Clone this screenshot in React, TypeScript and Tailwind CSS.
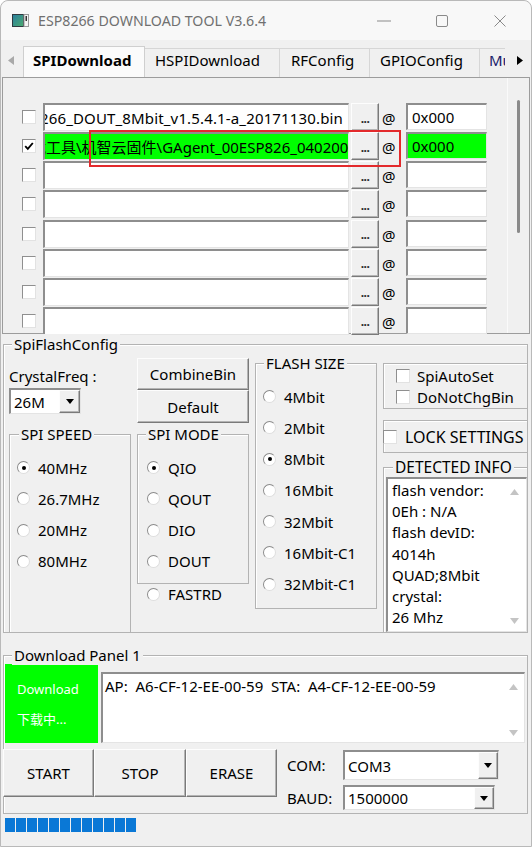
import React from "react";

const FONT = "font-['Noto_Sans','Noto_Sans_CJK_SC',sans-serif]";

const raised =
  "bg-[#f0f0f0] border border-t-[#fdfdfd] border-l-[#fdfdfd] border-b-[#7a7a7a] border-r-[#7a7a7a] shadow-[inset_-1px_-1px_0_#b4b4b4]";
const sunken =
  "border-t-2 border-l-2 border-b border-r border-t-[#8e8e8e] border-l-[#8e8e8e] border-b-[#e4e4e4] border-r-[#e4e4e4]";

function Check({ checked = false, className = "" }: { checked?: boolean; className?: string }) {
  return (
    <div
      className={`relative w-[14px] h-[14px] shrink-0 bg-white border border-t-[#8f8f8f] border-l-[#8f8f8f] border-b-[#e2e2e2] border-r-[#e2e2e2] ${className}`}
    >
      {checked && (
        <svg viewBox="0 0 12 12" className="absolute inset-0 w-full h-full">
          <path d="M2.2 6.2 L4.8 8.8 L9.8 3" fill="none" stroke="#000" strokeWidth="1.9" />
        </svg>
      )}
    </div>
  );
}

function Radio({ checked = false }: { checked?: boolean }) {
  return (
    <div className="w-[13px] h-[13px] shrink-0 rounded-full bg-white border border-t-[#8a8a8a] border-l-[#8a8a8a] border-b-[#dedede] border-r-[#dedede] flex items-center justify-center">
      {checked && <div className="w-[4px] h-[4px] rounded-full bg-black" />}
    </div>
  );
}

function RadioItem({ label, checked = false }: { label: string; checked?: boolean }) {
  return (
    <div className="h-[31.25px] flex items-center gap-[8px]">
      <Radio checked={checked} />
      <span className="whitespace-nowrap">{label}</span>
    </div>
  );
}

function Group({
  label,
  className = "",
  labelClass = "",
  children,
}: {
  label?: string;
  className?: string;
  labelClass?: string;
  children?: React.ReactNode;
}) {
  return (
    <div className={`relative shrink-0 border border-[#b3b3b3] shadow-[inset_1px_1px_0_#ffffff] ${className}`}>
      {label && (
        <span
          className={`absolute -top-[11px] px-[2px] bg-[#f0f0f0] leading-[20px] whitespace-nowrap ${labelClass}`}
        >
          {label}
        </span>
      )}
      {children}
    </div>
  );
}

function DownTriangle() {
  return (
    <svg width="8" height="5" viewBox="0 0 8 5">
      <path d="M0 0 H8 L4 5 Z" fill="#000" />
    </svg>
  );
}

function Combo({
  value,
  className,
  btnClass,
}: {
  value: string;
  className: string;
  btnClass: string;
}) {
  return (
    <div className={`flex shrink-0 bg-white ${sunken} ${className}`}>
      <div className="flex-1 flex items-center pl-[3px] whitespace-nowrap">{value}</div>
      <div className={`${raised} flex items-center justify-center ${btnClass}`}>
        <DownTriangle />
      </div>
    </div>
  );
}

function ScrollArrows({ className = "" }: { className?: string }) {
  return (
    <div className={`flex flex-col justify-between items-center ${className}`}>
      <svg width="9" height="6" viewBox="0 0 9 6">
        <path d="M0 6 L4.5 0 L9 6 Z" fill="#c4c4c4" />
      </svg>
      <svg width="9" height="6" viewBox="0 0 9 6">
        <path d="M0 0 L9 0 L4.5 6 Z" fill="#c4c4c4" />
      </svg>
    </div>
  );
}

function TitleBar() {
  return (
    <div className="h-[39px] flex items-center bg-[#f8f8f8] rounded-t-[8px]">
      <svg className="ml-[11px]" width="17" height="13" viewBox="0 0 17 13">
        <defs>
          <linearGradient id="appIconFill" x1="0" y1="0" x2="1" y2="1">
            <stop offset="0" stopColor="#2b7fa0" />
            <stop offset="1" stopColor="#4bab6e" />
          </linearGradient>
        </defs>
        <rect x="0.5" y="0.5" width="11" height="12" fill="url(#appIconFill)" stroke="#2f3a40" />
        <rect x="12" y="0.5" width="4.5" height="12" fill="#f4f4f4" stroke="#9a9a9a" />
        <rect x="13.5" y="2" width="1.5" height="5" fill="#333" />
      </svg>
      <span className="ml-[9px] text-[14.2px] text-[#707070] whitespace-nowrap">ESP8266 DOWNLOAD TOOL V3.6.4</span>
      <div className="ml-auto mr-[2px] flex h-full">
        <div className="w-[58px] flex items-center justify-center">
          <svg width="14" height="2" viewBox="0 0 14 2">
            <rect x="0" y="0.5" width="14" height="1" fill="#8a8a8a" />
          </svg>
        </div>
        <div className="w-[58px] flex items-center justify-center">
          <svg width="12" height="12" viewBox="0 0 12 12">
            <rect x="0.5" y="0.5" width="11" height="11" rx="1.5" fill="none" stroke="#8a8a8a" />
          </svg>
        </div>
        <div className="w-[58px] flex items-center justify-center">
          <svg width="12" height="12" viewBox="0 0 12 12">
            <path d="M0.5 0.5 L11.5 11.5 M11.5 0.5 L0.5 11.5" stroke="#8a8a8a" strokeWidth="1" />
          </svg>
        </div>
      </div>
    </div>
  );
}

function Tabs() {
  return (
    <div className="h-[37px] flex items-end">
      <div className="w-[22px] h-full flex items-center pl-[7px] pt-[4px]">
        <svg width="6" height="9" viewBox="0 0 6 9">
          <path d="M6 0 L0 4.5 L6 9 Z" fill="#a9a9a9" />
        </svg>
      </div>
      <div className="w-[122px] h-[31px] bg-[#fbfbfb] border border-b-0 border-[#cfcfcf] pl-[9px] pt-[3px] font-bold whitespace-nowrap">
        SPIDownload
      </div>
      <div className="w-[135px] h-[29px] border-t border-r border-[#d6d6d6] pl-[10px] pt-[1px] whitespace-nowrap">
        HSPIDownload
      </div>
      <div className="w-[90px] h-[29px] border-t border-r border-[#d6d6d6] pl-[11px] pt-[1px] whitespace-nowrap">
        RFConfig
      </div>
      <div className="w-[110px] h-[29px] border-t border-r border-[#d6d6d6] pl-[10px] pt-[1px] whitespace-nowrap">
        GPIOConfig
      </div>
      <div className="w-[25px] h-[29px] border-t border-[#d6d6d6] pl-[9px] pt-[1px] whitespace-nowrap overflow-hidden text-[#1a1a6a]">
        MultiDownload
      </div>
      <div className="flex-1 h-full flex items-center pl-[12px] pt-[3px]">
        <svg width="6" height="9" viewBox="0 0 6 9">
          <path d="M0 0 L6 4.5 L0 9 Z" fill="#000" />
        </svg>
      </div>
    </div>
  );
}

type FileRow = { checked: boolean; path: string; addr: string; green?: boolean; end?: boolean };

const files: FileRow[] = [
  {
    checked: false,
    path: "D:\\GAgent\\esp8266\\GAgent_00ESP8266_DOUT_8Mbit_v1.5.4.1-a_20171130.bin",
    addr: "0x000",
    end: true,
  },
  {
    checked: true,
    path: "载工具\\机智云固件\\GAgent_00ESP826_04020029_8Mbit.bin",
    addr: "0x000",
    green: true,
  },
  { checked: false, path: "", addr: "" },
  { checked: false, path: "", addr: "" },
  { checked: false, path: "", addr: "" },
  { checked: false, path: "", addr: "" },
  { checked: false, path: "", addr: "" },
  { checked: false, path: "", addr: "" },
];

function FilePanel() {
  return (
    <div className="relative ml-[1px] w-[528px] h-[257px] border border-[#9c9c9c] flex">
      <div className="w-[504px] pt-[25px] pl-[19px] flex flex-col">
        {files.map((f, i) => (
          <div key={i} className="h-[29.14px] flex items-start shrink-0">
            <Check className="mt-[7px]" checked={f.checked} />
            <div
              className={`ml-[7px] w-[306px] h-[28px] ${sunken} overflow-hidden flex items-center ${
                f.green ? "bg-[#00ff00]" : "bg-white"
              } ${f.end ? "justify-end pr-[5px]" : ""}`}
            >
              <span
                className={`whitespace-nowrap ${f.green ? "-ml-[14px]" : ""} ${f.end ? "tracking-[0.15px]" : ""}`}
              >
                {f.path}
              </span>
            </div>
            <div className={`ml-[2px] w-[28px] h-[28px] ${raised} flex items-center justify-center`}>
              <span className="text-[12px] leading-none font-bold text-[#2a2a2a] pt-[3px] tracking-[-0.5px]">...</span>
            </div>
            <span className="ml-[3px] w-[13px] h-[28px] flex items-center pt-[2px]">@</span>
            <div
              className={`ml-[11px] w-[81px] h-[27px] ${sunken} flex items-center pl-[4px] ${
                f.green ? "bg-[#00ff00]" : "bg-white"
              }`}
            >
              {f.addr}
            </div>
          </div>
        ))}
      </div>
      <div className="w-[22px] border-l border-[#fafafa] pt-[22px] flex justify-center">
        <div className="w-[3px] h-[133px] rounded-full bg-[#8a8a8a]" />
      </div>
      {/* highlight frame over the second row */}
      <div className="absolute left-[86px] top-[52px] w-[312px] h-[37px] border-2 border-[#e32a2c]" />
    </div>
  );
}

function SpiFlashConfig() {
  return (
    <Group label="SpiFlashConfig" labelClass="left-[8px]" className="mt-[10px] ml-[2px] w-[525px] h-[289px]">
      <div className="flex pl-[5px]">
        {/* crystal + speed */}
        <div className="w-[122px] flex flex-col shrink-0">
          <div className="mt-[21px] h-[20px] whitespace-nowrap">CrystalFreq :</div>
          <Combo value="26M" className="mt-[2px] w-[72px] h-[26px]" btnClass="w-[21px] h-full" />
          <Group label="SPI SPEED" labelClass="left-[9px]" className="mt-[20px] h-[199px] pt-[17px] pl-[7px]">
            <RadioItem label="40MHz" checked />
            <RadioItem label="26.7MHz" />
            <RadioItem label="20MHz" />
            <RadioItem label="80MHz" />
          </Group>
        </div>
        {/* buttons + mode */}
        <div className="ml-[6px] w-[112px] flex flex-col shrink-0">
          <div className={`mt-[13px] h-[32px] ${raised} flex items-center justify-center`}>CombineBin</div>
          <div className={`h-[33px] ${raised} flex items-center justify-center`}>Default</div>
          <Group label="SPI MODE" labelClass="left-[8px]" className="mt-[11px] h-[150px] pt-[17px] pl-[9px]">
            <RadioItem label="QIO" checked />
            <RadioItem label="QOUT" />
            <RadioItem label="DIO" />
            <RadioItem label="DOUT" />
          </Group>
          <div className="h-[20px] pl-[10px] flex items-center gap-[8px]">
            <Radio />
            <span>FASTRD</span>
          </div>
        </div>
        {/* flash size */}
        <div className="ml-[6px] w-[122px] flex flex-col shrink-0">
          <Group label="FLASH SIZE" labelClass="left-[8px]" className="mt-[18px] h-[246px] pt-[17px] pl-[7px]">
            <RadioItem label="4Mbit" />
            <RadioItem label="2Mbit" />
            <RadioItem label="8Mbit" checked />
            <RadioItem label="16Mbit" />
            <RadioItem label="32Mbit" />
            <RadioItem label="16Mbit-C1" />
            <RadioItem label="32Mbit-C1" />
          </Group>
        </div>
        {/* options + detected info */}
        <div className="ml-[6px] w-[145px] flex flex-col shrink-0">
          <Group className="mt-[18px] h-[46px] pt-[1px] pl-[12px]">
            <div className="h-[21px] flex items-center gap-[7px]">
              <Check />
              <span>SpiAutoSet</span>
            </div>
            <div className="h-[21px] flex items-center gap-[7px]">
              <Check />
              <span>DoNotChgBin</span>
            </div>
          </Group>
          <Group className="mt-[11px] h-[33px] flex items-center">
            <Check className="-ml-px" />
            <span className="ml-[8px] text-[16px] whitespace-nowrap">LOCK SETTINGS</span>
          </Group>
          <Group
            label="DETECTED INFO"
            labelClass="left-[9px] text-[15.5px]"
            className="mt-[14px] h-[166px] pt-[9px] pl-[2px]"
          >
            <div className={`w-[141px] h-[155px] bg-white ${sunken} flex`}>
              <div className="flex-1 pl-[4px] pt-[1px] leading-[21.2px] whitespace-nowrap">
                <div>flash vendor:</div>
                <div>0Eh : N/A</div>
                <div>flash devID:</div>
                <div>4014h</div>
                <div>QUAD;8Mbit</div>
                <div>crystal:</div>
                <div>26 Mhz</div>
              </div>
              <ScrollArrows className="w-[20px] pt-[10px] pb-[7px] pr-[3px]" />
            </div>
          </Group>
        </div>
      </div>
    </Group>
  );
}

function DownloadPanel() {
  return (
    <Group label="Download Panel 1" labelClass="left-[8px]" className="mt-[22px] ml-[2px] w-[525px] h-[159px]">
      <div className="flex pl-[1px] pt-[8px]">
        <div className="w-[93px] h-[79px] bg-[#00ff00] text-white text-[13px] leading-[29.7px] pl-[12px] pt-[11px]">
          <div>Download</div>
          <div>下载中...</div>
        </div>
        <div className={`ml-[3px] mt-[8px] w-[424px] h-[71px] bg-white ${sunken} flex`}>
          <div className="flex-1 pl-[2px] pt-[2px] whitespace-pre">AP:  A6-CF-12-EE-00-59  STA:  A4-CF-12-EE-00-59</div>
          <ScrollArrows className="w-[20px] pt-[10px] pb-[6px] pr-[2px]" />
        </div>
      </div>
      <div className="mt-[6px] -ml-px flex">
        <div className={`w-[91px] h-[48px] ${raised} flex items-center justify-center`}>START</div>
        <div className={`w-[92px] h-[48px] ${raised} flex items-center justify-center`}>STOP</div>
        <div className={`w-[91px] h-[48px] ${raised} flex items-center justify-center`}>ERASE</div>
        <div className="ml-[10px] flex flex-col">
          <div className="mt-[1px] h-[30px] flex items-center">
            <span className="w-[56px]">COM:</span>
            <Combo value="COM3" className="w-[156px] h-[30px]" btnClass="w-[20px] h-full" />
          </div>
          <div className="mt-[5px] h-[25px] flex items-center">
            <span className="w-[56px]">BAUD:</span>
            <Combo value="1500000" className="w-[152px] h-[25px]" btnClass="w-[20px] h-full" />
          </div>
        </div>
      </div>
    </Group>
  );
}

function Progress() {
  const blocks = Array.from({ length: 12 });
  return (
    <div className="mt-[4px] ml-[4px] flex gap-[1px]">
      {blocks.map((_, i) => (
        <div key={i} className="w-[10px] h-[14px] bg-[#0a78d6]" />
      ))}
    </div>
  );
}

export default function App() {
  return (
    <div
      className={`${FONT} w-[532px] h-[847px] overflow-hidden bg-[#f0f0f0] text-black text-[15px] leading-[20px] border border-[#b9b9b9] rounded-t-[8px]`}
    >
      <TitleBar />
      <Tabs />
      <FilePanel />
      <SpiFlashConfig />
      <DownloadPanel />
      <Progress />
    </div>
  );
}
